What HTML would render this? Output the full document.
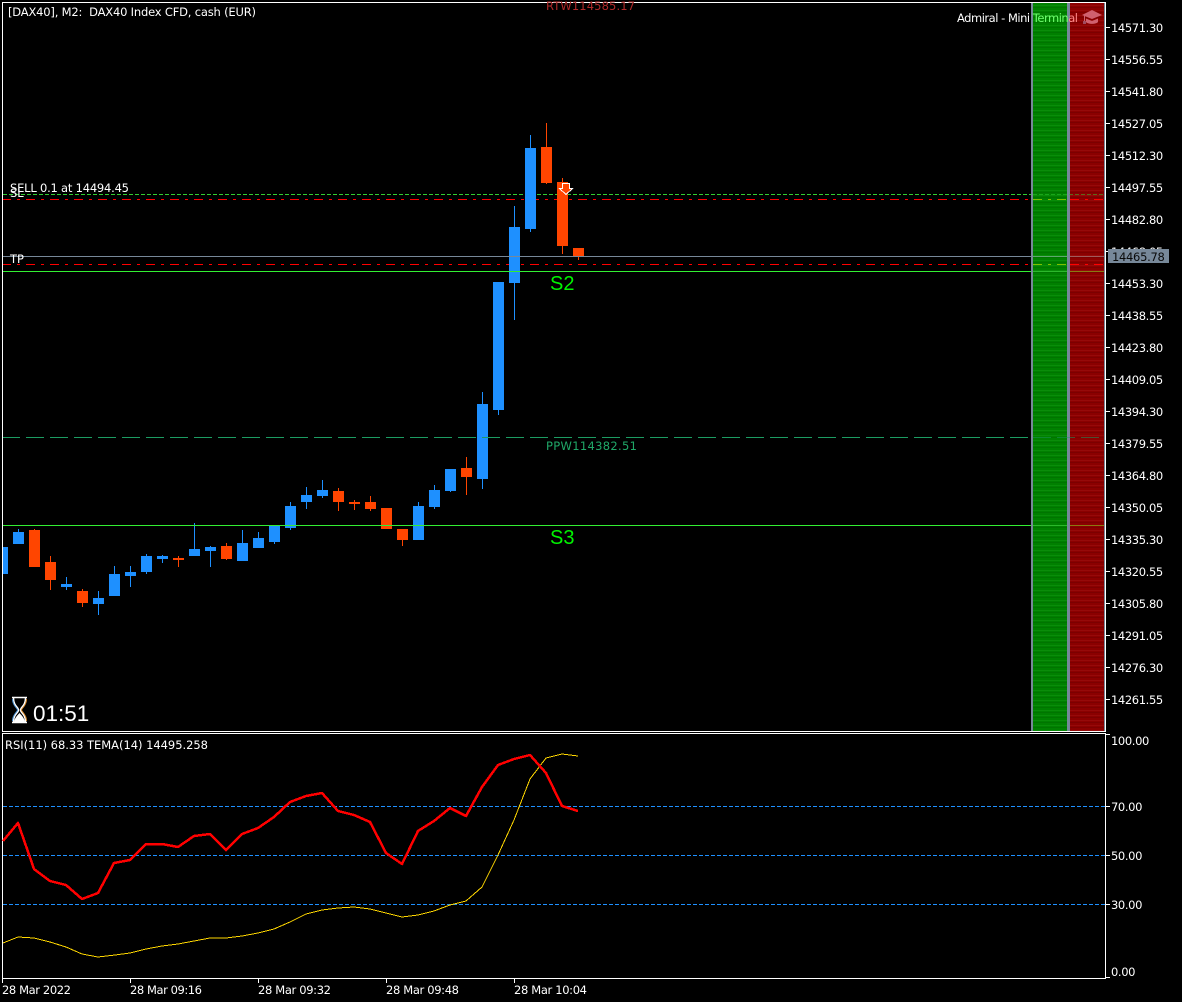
<!DOCTYPE html>
<html lang="en">
<head>
<meta charset="utf-8">
<title>DAX40 M2</title>
<style>
html,body{margin:0;padding:0;background:#000;width:1182px;height:1002px;overflow:hidden}
svg{display:block}
text{font-family:"DejaVu Sans","Liberation Sans",sans-serif;font-size:11.5px;fill:#fff;white-space:pre}
.a text{letter-spacing:-.38px}
.l{font-family:"Liberation Sans",sans-serif}
</style>
</head>
<body>
<svg width="1182" height="1002" viewBox="0 0 1182 1002" xmlns="http://www.w3.org/2000/svg">
<defs>
<pattern id="g" width="5" height="5" patternUnits="userSpaceOnUse" y="3"><rect width="5" height="5" fill="#008000"/><rect y="2" width="5" height="1" fill="#0a8c0a"/><rect y="4" width="5" height="1" fill="#007400"/></pattern>
<pattern id="r" width="5" height="5" patternUnits="userSpaceOnUse" y="3"><rect width="5" height="5" fill="#8b0000"/><rect y="2" width="5" height="1" fill="#960a0a"/><rect y="4" width="5" height="1" fill="#7c0000"/></pattern>
<linearGradient id="tg" gradientUnits="userSpaceOnUse" x1="957" x2="1078" y1="0" y2="0">
<stop offset="0" stop-color="#fff"/><stop offset=".6198" stop-color="#fff"/><stop offset=".6198" stop-color="#70ff70"/><stop offset=".9174" stop-color="#70ff70"/><stop offset=".9174" stop-color="#ff8a8a"/><stop offset="1" stop-color="#ff8a8a"/>
</linearGradient>
</defs>

<!-- panels -->
<g shape-rendering="crispEdges">
<rect x="1031" y="3" width="2" height="728" fill="#778899"/>
<rect x="1033" y="3" width="34" height="728" fill="url(#g)"/>
<rect x="1067" y="3" width="3" height="728" fill="#778899"/>
<rect x="1070" y="3" width="34" height="728" fill="url(#r)"/>
<rect x="1104" y="3" width="1" height="728" fill="#778899"/>
</g>

<!-- order lines (behind candles) -->
<g shape-rendering="crispEdges" fill="none">
<path d="M3 194.500H1031" stroke="#32cd32" stroke-dasharray="4 2"/>
<path d="M2 199.500H1031" stroke="#f00" stroke-dasharray="9 6 3 6"/>
<path d="M2 264.500H1031" stroke="#f00" stroke-dasharray="9 6 3 6"/>
<g opacity=".5">
<path d="M1033 194.500H1104" stroke="#32cd32" stroke-dasharray="4 2"/>
<path d="M1033 199.500H1067" stroke="#ff0" stroke-dasharray="9 6 3 6"/>
<path d="M1033 264.500H1067" stroke="#ff0" stroke-dasharray="9 6 3 6"/>
</g>
<path d="M1070 199.500H1104" stroke="#f00" stroke-dasharray="9 6 3 6"/>
<path d="M1070 264.500H1104" stroke="#f00" stroke-dasharray="9 6 3 6"/>
</g>

<!-- candles -->
<path shape-rendering="crispEdges" fill="#1e90ff" d="M3 547h5v27h-5z
M13 532h11v12h-11zM18 529h1v15h-1z
M61 584h11v3h-11zM66 577h1v13h-1z
M93 598h11v6h-11zM98 591h1v24h-1z
M109 574h11v22h-11zM114 566h1v30h-1z
M125 572h11v4h-11zM130 566h1v21h-1z
M141 556h11v16h-11zM146 554h1v20h-1z
M157 556h11v3h-11zM162 555h1v8h-1z
M189 549h11v7h-11zM194 523h1v33h-1z
M205 547h11v4h-11zM210 546h1v21h-1z
M237 543h11v18h-11zM242 530h1v31h-1z
M253 538h11v10h-11zM258 532h1v16h-1z
M269 525h11v17h-11zM274 525h1v19h-1z
M285 506h11v22h-11zM290 502h1v28h-1z
M301 495h11v7h-11zM306 487h1v22h-1z
M317 490h11v6h-11zM322 480h1v18h-1z
M413 506h11v34h-11zM418 502h1v38h-1z
M429 490h11v17h-11zM434 485h1v24h-1z
M445 469h11v22h-11zM450 469h1v23h-1z
M477 404h11v75h-11zM482 392h1v97h-1z
M493 282h11v128h-11zM498 282h1v133h-1z
M509 227h11v56h-11zM514 206h1v114h-1z
M525 148h11v81h-11zM530 135h1v97h-1z"/>
<path shape-rendering="crispEdges" fill="#ff4500" d="M29 530h11v37h-11zM34 529h1v38h-1z
M45 562h11v18h-11zM50 556h1v34h-1z
M77 591h11v12h-11zM82 589h1v18h-1z
M173 558h11v2h-11zM178 556h1v11h-1z
M221 546h11v13h-11zM226 543h1v17h-1z
M333 491h11v11h-11zM338 488h1v23h-1z
M349 502h11v2h-11zM354 500h1v10h-1z
M365 502h11v7h-11zM370 496h1v15h-1z
M381 508h11v21h-11z
M397 529h11v11h-11zM402 529h1v17h-1z
M461 468h11v9h-11zM466 457h1v38h-1z
M541 147h11v36h-11zM546 123h1v61h-1z
M557 182h11v64h-11zM562 178h1v76h-1z
M573 248h11v9h-11zM578 248h1v12h-1z"/>

<!-- foreground lines -->
<g shape-rendering="crispEdges" fill="none">
<path d="M3 256.500H1031" stroke="#778899"/>
<path d="M3 271.500H1031" stroke="#32ef32"/>
<path d="M3 525.500H1031" stroke="#32ef32"/>
<path d="M2 437.500H1031" stroke="#1c9c62" stroke-dasharray="18 6"/>
<path d="M1033 256.500H1067" stroke="#5fa76f"/>
<path d="M1070 256.500H1104" stroke="#a05a5a"/>
<path d="M1033 271.500H1067" stroke="#2cb82c"/>
<path d="M1070 271.500H1104" stroke="#8a7a10"/>
<path d="M1033 525.500H1067" stroke="#2cb82c"/>
<path d="M1070 525.500H1104" stroke="#8a7a10"/>
<path d="M1033 437.500H1104" stroke="#1c9c62" stroke-dasharray="18 6" opacity=".5"/>
</g>

<!-- arrow -->
<path shape-rendering="crispEdges" d="M562.500 183.500h7v5h3l-6.500 6-6.500-6h3z" fill="#ff4500" stroke="#fff"/>

<!-- borders -->
<g shape-rendering="crispEdges" fill="#fff">
<rect x="2" y="2" width="1104" height="1"/>
<rect x="2" y="2" width="1" height="730"/>
<rect x="1105" y="2" width="1" height="730"/>
<rect x="2" y="731" width="1104" height="1"/>
<rect x="2" y="733" width="1104" height="1"/>
<rect x="2" y="733" width="1" height="246"/>
<rect x="1105" y="733" width="1" height="246"/>
<rect x="2" y="978" width="1104" height="1"/>
<!-- price ticks -->
<path d="M1106 27h4v1h-4zM1106 59h4v1h-4zM1106 91h4v1h-4zM1106 123h4v1h-4zM1106 155h4v1h-4zM1106 187h4v1h-4zM1106 219h4v1h-4zM1106 251h4v1h-4zM1106 283h4v1h-4zM1106 315h4v1h-4zM1106 347h4v1h-4zM1106 379h4v1h-4zM1106 411h4v1h-4zM1106 443h4v1h-4zM1106 475h4v1h-4zM1106 507h4v1h-4zM1106 539h4v1h-4zM1106 571h4v1h-4zM1106 603h4v1h-4zM1106 635h4v1h-4zM1106 667h4v1h-4zM1106 699h4v1h-4z"/>
<!-- rsi ticks -->
<path d="M1106 734h4v1h-4zM1106 806h4v1h-4zM1106 855h4v1h-4zM1106 904h4v1h-4zM1106 977h4v1h-4z"/>
<!-- time ticks -->
<path d="M2 979h1v4h-1zM130 979h1v4h-1zM258 979h1v4h-1zM386 979h1v4h-1zM514 979h1v4h-1z"/>
</g>

<!-- rsi levels -->
<g shape-rendering="crispEdges" fill="none" stroke="#1e90ff" stroke-dasharray="4 2">
<path d="M3 806.500H1105"/>
<path d="M3 855.500H1105"/>
<path d="M3 904.500H1105"/>
</g>

<!-- rsi lines -->
<polyline shape-rendering="crispEdges" fill="none" stroke="#ffd700" stroke-width="1" points="3,943 18,937 34,938 50,942 66,947 82,954 98,957 115,955 130,953 146,949 162,946 178,944 194,941 210,938 226,938 242,936 258,933 274,929 290,922 306,914 322,910 338,908 354,907 370,909 386,913 402,917 418,915 434,911 450,905 466,901 482,887 498,855 514,820 530,779 546,758 562,754 578,756"/>
<polyline shape-rendering="crispEdges" fill="none" stroke="#f00" stroke-width="2.500" stroke-linejoin="round" points="3,841 18,823 34,869 50,881 66,885 82,899 98,893 114,863 130,860 146,844 162,844 178,847 194,836 210,834 226,850 242,834 258,828 274,817 290,802 306,796 322,793 338,811 354,815 370,822 386,853 402,864 418,831 434,821 450,808 466,816 482,787 498,765 514,759 530,755 546,773 562,806 578,811"/>

<!-- chart labels -->
<text x="8" y="16" textLength="248" lengthAdjust="spacing">[DAX40], M2:  DAX40 Index CFD, cash (EUR)</text>
<text x="957" y="22" textLength="121" lengthAdjust="spacing" style="fill:url(#tg)">Admiral - Mini Terminal</text>
<text x="546" y="10" textLength="89" lengthAdjust="spacing" style="fill:#b02a2a">RTW114585.17</text>
<text x="10" y="192" textLength="119" lengthAdjust="spacing">SELL 0.1 at 14494.45</text>
<text x="10" y="197">SL</text>
<text x="10" y="263">TP</text>
<text x="546" y="450" textLength="91" lengthAdjust="spacing" style="fill:#20a868">PPW114382.51</text>
<text class="l" x="550" y="290" style="font-size:20px;fill:#00f400;font-family:'Liberation Sans',sans-serif">S2</text>
<text class="l" x="550" y="544" style="font-size:20px;fill:#00f400;font-family:'Liberation Sans',sans-serif">S3</text>
<text class="l" x="33" y="721" style="font-size:22.500px;font-family:'Liberation Sans',sans-serif">01:51</text>

<!-- hourglass -->
<g fill="none" stroke-width="1.500">
<path d="M12 697.500H27M13.500 698C13.500 706 18.500 707 18.500 710C18.500 713 13.500 714 13.500 722M25.500 698C25.500 706 20.500 707 20.500 710C20.500 713 25.500 714 25.500 722M12 722.500H27" stroke="#fff"/>
<path d="M12.500 699C12.500 706 17.500 708 17.500 710C17.500 712 12.500 714 12.500 721" stroke="#4a90d0" stroke-width="1"/>
<path d="M26.500 699C26.500 706 21.500 708 21.500 710C21.500 712 26.500 714 26.500 721" stroke="#e09030" stroke-width="1"/>
</g>
<path d="M14 722C15 717 18 715 19.500 713C21 715 24 717 25 722z" fill="#fff"/>

<!-- mortarboard -->
<g fill="#d0606e">
<path d="M1092 10L1102 15L1092 19L1082 15z"/>
<path d="M1086 18.500L1092 21L1098 18.500V22C1096 24.500 1088 24.500 1086 22z"/>
<path d="M1084 15.500h1v6h-1z"/>
<path d="M1083 21h3v3h-3z" fill="#a04a5e"/>
</g>

<!-- price axis -->
<g class="a">
<text x="1111" y="32">14571.30</text>
<text x="1111" y="64">14556.55</text>
<text x="1111" y="96">14541.80</text>
<text x="1111" y="128">14527.05</text>
<text x="1111" y="160">14512.30</text>
<text x="1111" y="192">14497.55</text>
<text x="1111" y="224">14482.80</text>
<text x="1111" y="256">14468.05</text>
<text x="1111" y="288">14453.30</text>
<text x="1111" y="320">14438.55</text>
<text x="1111" y="352">14423.80</text>
<text x="1111" y="384">14409.05</text>
<text x="1111" y="416">14394.30</text>
<text x="1111" y="448">14379.55</text>
<text x="1111" y="480">14364.80</text>
<text x="1111" y="512">14350.05</text>
<text x="1111" y="544">14335.30</text>
<text x="1111" y="576">14320.55</text>
<text x="1111" y="608">14305.80</text>
<text x="1111" y="640">14291.05</text>
<text x="1111" y="672">14276.30</text>
<text x="1111" y="704">14261.55</text>
<text x="1111" y="745">100.00</text>
<text x="1111" y="811">70.00</text>
<text x="1111" y="860">50.00</text>
<text x="1111" y="909">30.00</text>
<text x="1111" y="976">0.00</text>
</g>
<rect shape-rendering="crispEdges" x="1108" y="249" width="61" height="14" fill="#778899"/>
<text x="1112" y="261" style="fill:#0a0a0a;letter-spacing:-.3px">14465.78</text>

<!-- rsi label -->
<text x="5" y="749" textLength="203" lengthAdjust="spacing">RSI(11) 68.33 TEMA(14) 14495.258</text>

<!-- time axis -->
<text x="2" y="994" textLength="69" lengthAdjust="spacing">28 Mar 2022</text>
<text x="130" y="994" textLength="72" lengthAdjust="spacing">28 Mar 09:16</text>
<text x="258" y="994" textLength="73" lengthAdjust="spacing">28 Mar 09:32</text>
<text x="386" y="994" textLength="73" lengthAdjust="spacing">28 Mar 09:48</text>
<text x="514" y="994" textLength="73" lengthAdjust="spacing">28 Mar 10:04</text>
</svg>
</body>
</html>
